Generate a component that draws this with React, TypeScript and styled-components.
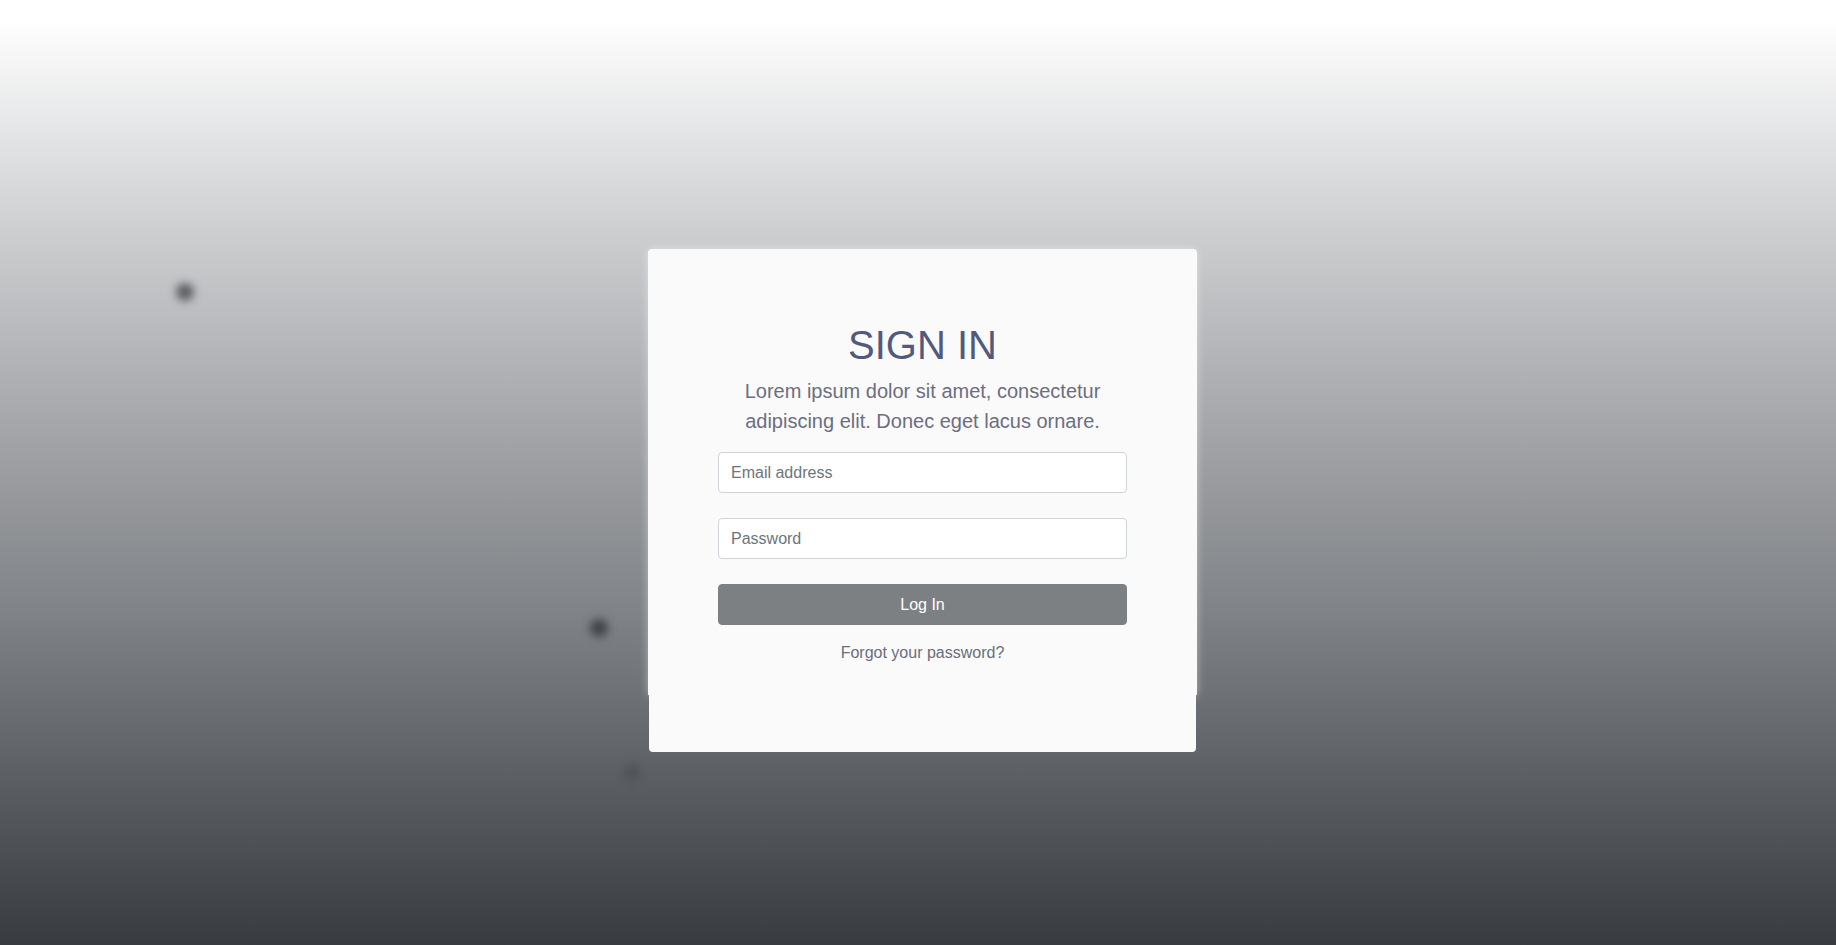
import React from "react";
import styled, { createGlobalStyle } from "styled-components";

const GlobalStyle = createGlobalStyle`
  html, body {
    margin: 0;
    padding: 0;
  }
  body {
    font-family: "Liberation Sans", Arial, Helvetica, sans-serif;
    font-size: 16px;
    line-height: 1.5;
  }
  * { box-sizing: border-box; }
`;

const Page = styled.main`
  position: relative;
  min-height: 100vh;
  overflow: hidden;
  display: flex;
  flex-direction: column;
  align-items: center;
  padding: 249px 0 0 9px;
  background: linear-gradient(to bottom, #ffffff 0%, #ffffff 2%, #cbcdcf 25%, #a4a6a9 45%, #7f8286 65%, #5c5f63 82%, #383c40 100%);
`;

const Particle = styled.span<{ $x: number; $y: number; $size: number; $alpha: number; $blur: number }>`
  position: absolute;
  left: ${(p) => p.$x - p.$size / 2}px;
  top: ${(p) => p.$y - p.$size / 2}px;
  width: ${(p) => p.$size}px;
  height: ${(p) => p.$size}px;
  border-radius: 50%;
  background: rgba(50, 52, 55, ${(p) => p.$alpha});
  filter: blur(${(p) => p.$blur}px);
`;

const Panel = styled.section`
  position: relative;
  width: 547px;
  background: #fafafa;
  border-radius: 4px;
  padding-bottom: 57px;
`;

const Card = styled.div`
  margin: 0 -1px;
  background: #fafafa;
  border-radius: 4px 4px 0 0;
  box-shadow: 0 0 8px rgba(255, 255, 255, 0.45);
  padding: 72px 70px 30px;
  display: flex;
  flex-direction: column;
  align-items: stretch;
  text-align: center;
`;

const Title = styled.h1`
  margin: 0 0 7px;
  font-size: 40px;
  font-weight: 400;
  line-height: 1.2;
  color: #515a7c;
`;

const Lead = styled.p`
  margin: 0 0 16px;
  font-size: 20px;
  line-height: 30px;
  color: #6c6e80;
`;

const Form = styled.form`
  display: flex;
  flex-direction: column;
  gap: 25px;
`;

const Input = styled.input`
  display: block;
  width: 100%;
  height: 41px;
  padding: 0 12px;
  font-family: inherit;
  font-size: 16px;
  color: #495057;
  background: #ffffff;
  border: 1px solid #ced4da;
  border-radius: 4px;
  outline: none;

  &::placeholder {
    color: #6c757d;
    opacity: 1;
  }
`;

const Button = styled.button`
  display: block;
  width: 100%;
  height: 41px;
  font-family: inherit;
  font-size: 16px;
  color: #ffffff;
  background: #7d8083;
  border: 1px solid #7d8083;
  border-radius: 4px;
  cursor: pointer;
`;

const Forgot = styled.a`
  display: block;
  margin-top: 16px;
  font-size: 16px;
  line-height: 24px;
  color: #6a6d7c;
  text-decoration: none;
`;

export default function App() {
  return (
    <>
      <GlobalStyle />
      <Page>
        <Particle $x={185} $y={292} $size={18} $alpha={0.7} $blur={4} />
        <Particle $x={599} $y={628} $size={18} $alpha={0.8} $blur={4} />
        <Particle $x={632} $y={772} $size={16} $alpha={0.3} $blur={5} />
        <Panel>
          <Card>
            <Title>SIGN IN</Title>
            <Lead>
              Lorem ipsum dolor sit amet, consectetur
              <br />
              adipiscing elit. Donec eget lacus ornare.
            </Lead>
            <Form onSubmit={(e) => e.preventDefault()}>
              <Input type="email" placeholder="Email address" />
              <Input type="password" placeholder="Password" />
              <Button type="submit">Log In</Button>
            </Form>
            <Forgot href="#">Forgot your password?</Forgot>
          </Card>
        </Panel>
      </Page>
    </>
  );
}
